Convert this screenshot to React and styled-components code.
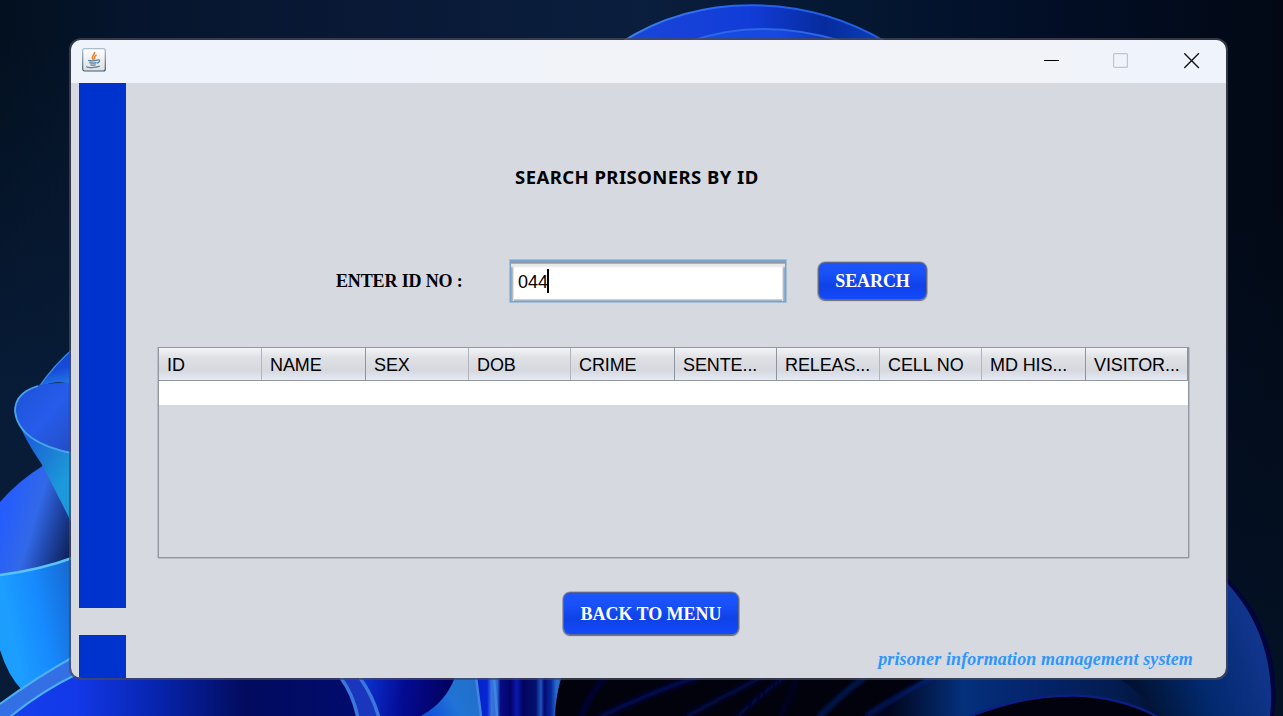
import React from "react";
import styled, { createGlobalStyle } from "styled-components";

const GlobalStyle = createGlobalStyle`
  * { box-sizing: border-box; }
  body { margin: 0; overflow: hidden; background: #04122a; }
`;

const Desktop = styled.main`
  position: relative;
  width: 1283px;
  height: 716px;
  overflow: hidden;
  padding: 38px 55px 36px 69px;
`;

const WallpaperArt = styled.svg`
  position: absolute;
  inset: 0;
  width: 1283px;
  height: 716px;
`;

const Window = styled.section`
  position: relative;
  width: 1159px;
  height: 642px;
  border: 2px solid rgba(72, 74, 86, 0.72);
  border-radius: 12px;
  overflow: hidden;
  display: flex;
  flex-direction: column;
  background: #d6d9e0;
  background-clip: padding-box;
`;

const TitleBar = styled.header`
  flex: 0 0 43px;
  display: flex;
  align-items: center;
  justify-content: space-between;
  padding: 0 26px 4px 11px;
  background: linear-gradient(90deg, #eff3fc 0%, #f0f3fb 30%, #f2f3f8 55%, #f2f3f8 82%, #eff3fc 94%);
`;

const Controls = styled.div`
  display: grid;
  grid-template-columns: 69px 71px 16px;
  padding-top: 3px;
`;

const Body = styled.div`
  flex: 1;
  display: flex;
  padding-left: 8px;
`;

const Rail = styled.aside`
  width: 47px;
  display: grid;
  grid-template-rows: 525px 43px;
  row-gap: 27px;
`;

const RailBlock = styled.div`
  background: #0033cd;
`;

const Content = styled.div`
  flex: 1;
  display: flex;
  flex-direction: column;
  padding: 80px 34px 0 32px;
`;

const Heading = styled.h1`
  margin: 0 0 0 357px;
  height: 28px;
  font: 700 18.5px/28px "Noto Sans", sans-serif;
  letter-spacing: 0.44px;
  color: #000;
  white-space: nowrap;
`;

const SearchForm = styled.div`
  display: flex;
  align-items: center;
  margin-top: 68px;
  padding-left: 178px;
  height: 44px;
`;

const Label = styled.label`
  width: 173px;
  font: 700 18px/22px "Liberation Serif", serif;
  letter-spacing: -0.14px;
  color: #000;
  white-space: nowrap;
`;

const Field = styled.div`
  width: 278px;
  height: 44px;
  display: flex;
  align-items: center;
  padding: 2px 0 0 8px;
  border: 1px solid #a3bfda;
  background: #fff;
  box-shadow: inset 0 0 0 1px #76a3cf, inset 0 2px 0 #76a3cf, inset 0 3px 0 #8e9aa6,
    inset 0 4px 0 #b0b0b2, inset 0 7px 2px #e8e8e8, inset 2px 0 0 #8caac8, inset 3px 0 0 #b4bac2,
    inset 4px 0 0 #e4e4e4, inset -2px 0 0 #8caac8, inset -3px 0 0 #b4bac2, inset -4px 0 0 #e4e4e4,
    inset 0 -2px 0 #a4b4c4, inset 0 -3px 0 #cdcfd2;
  font: 400 18px/24px "Liberation Sans", sans-serif;
  color: #000;
`;

const Caret = styled.span`
  width: 2px;
  height: 24px;
  margin: -2px 0 0 -1px;
  background: #000;
`;

const Button = styled.button`
  width: ${(p) => p.$width}px;
  height: ${(p) => p.$height}px;
  padding: 0;
  border: 1px solid #5b678c;
  border-radius: 7px;
  background: linear-gradient(#1d54fb 0%, #1850fa 30%, #0f42e7 62%, #134af9 100%);
  background-clip: border-box;
  box-shadow: 0 0 0 0.6px rgba(110, 112, 122, 0.75), 0 1px 1px rgba(90, 92, 104, 0.85);
  font: 700 18px/22px "Liberation Serif", serif;
  letter-spacing: ${(p) => p.$tracking}px;
  color: #fff;
  white-space: nowrap;
`;

const SearchButton = styled(Button)`
  margin: 0 0 0 31px;
`;

const BackButton = styled(Button)`
  margin: 34px 0 0 405px;
`;

const Table = styled.div`
  width: 1031px;
  height: 211px;
  margin-top: 44px;
  border: 1px solid #9297a1;
  box-shadow: -1px 0 0 #b9bdc6, 1px 0 0 #b9bdc6, 0 1px 0 #b9bdc6;
`;

const HeaderRow = styled.div`
  display: grid;
  grid-template-columns: 103px 104px 103px 102px 104px 102px 103px 102px 104px 102px;
  height: 33px;
  border-bottom: 1px solid #9297a1;
  background: linear-gradient(#f3f4f7 0%, #dfe1e5 30%, #d5d8de 70%, #e6eaf3 100%);
`;

const HeaderCell = styled.div`
  padding: 6px 0 0 8px;
  border-right: ${(p) => (p.$strong ? "1px solid #8f939b" : "1px solid #b2b5bb")};
  font: 400 18px/23px "Liberation Sans", sans-serif;
  letter-spacing: -0.1px;
  color: #000;
  white-space: nowrap;
`;

const EmptyRow = styled.div`
  height: 24px;
  background: #fff;
`;

const Footer = styled.footer`
  margin-top: 13px;
  align-self: flex-end;
  font: italic 700 18px/22px "Liberation Serif", serif;
  letter-spacing: 0.14px;
  margin-right: -1px;
  color: #3096f8;
  white-space: nowrap;
`;

const columns = ["ID", "NAME", "SEX", "DOB", "CRIME", "SENTE...", "RELEAS...", "CELL NO", "MD HIS...", "VISITOR..."];
const strongDividers = [1, 4, 5, 8, 9];

function Gradient({ id, from, to, stops }) {
  return (
    <linearGradient id={id} gradientUnits="userSpaceOnUse" x1={from[0]} y1={from[1]} x2={to[0]} y2={to[1]}>
      {stops.map(([offset, color]) => (
        <stop key={offset} offset={offset} stopColor={color} />
      ))}
    </linearGradient>
  );
}

function Wallpaper() {
  return (
    <WallpaperArt viewBox="0 0 1283 716" aria-hidden="true">
      <defs>
        <Gradient id="sky" from={[0, 0]} to={[1283, 0]} stops={[[0, "#03101f"], [0.1, "#06152d"], [0.28, "#091936"], [0.5, "#0a1e3d"], [0.65, "#051833"], [0.82, "#020e26"], [1, "#020915"]]} />
        <linearGradient id="glow" x2="0" y2="1">
          <stop stopColor="#081c38" stopOpacity="0" />
          <stop offset="0.8" stopColor="#081c38" />
        </linearGradient>
        <linearGradient id="rightGlow" x2="0" y2="1">
          <stop stopColor="#041226" stopOpacity="0" />
          <stop offset="1" stopColor="#041226" />
        </linearGradient>
        <Gradient id="bloom" from={[650, 30]} to={[870, 30]} stops={[[0, "#1944d8"], [0.45, "#123cd8"], [0.8, "#062b9d"], [1, "#0b3ab5"]]} />
        <Gradient id="bloomInner" from={[690, 30]} to={[840, 40]} stops={[[0, "#164be6"], [0.6, "#1748df"], [1, "#0a32b4"]]} />
        <Gradient id="rim" from={[620, 40]} to={[880, 40]} stops={[[0, "#3d83e8"], [0.5, "#2660f4"], [1, "#225fdb"]]} />
        <Gradient id="peak" from={[50, 350]} to={[60, 390]} stops={[[0, "#1642d1"], [0.5, "#174bd9"], [1, "#2686e6"]]} />
        <Gradient id="cup" from={[15, 390]} to={[72, 440]} stops={[[0, "#1d52d9"], [0.55, "#265cea"], [1, "#244fcb"]]} />
        <Gradient id="cone" from={[35, 430]} to={[78, 455]} stops={[[0, "#1c62df"], [0.5, "#1b7ed4"], [1, "#1c98db"]]} />
        <Gradient id="fold" from={[0, 515]} to={[82, 540]} stops={[[0, "#245cff"], [0.4, "#3269e8"], [0.7, "#1b3d96"], [1, "#09163f"]]} />
        <Gradient id="bowl" from={[5, 600]} to={[75, 585]} stops={[[0, "#1c9eff"], [0.45, "#168aff"], [1, "#1768cf"]]} />
        <Gradient id="low" from={[0, 690]} to={[350, 690]} stops={[[0, "#1740ed"], [0.22, "#1238e8"], [0.45, "#0724ad"], [0.7, "#020b5e"], [1, "#010b6c"]]} />
        <Gradient id="lowRight" from={[365, 690]} to={[450, 700]} stops={[[0, "#0a2fce"], [0.45, "#040b93"], [1, "#02015d"]]} />
        <Gradient id="stem" from={[430, 716]} to={[478, 690]} stops={[[0, "#1153db"], [0.5, "#2074d6"], [1, "#226fc9"]]} />
        <Gradient id="ribbons" from={[477, 700]} to={[561, 700]} stops={[[0, "#0625c8"], [0.12, "#0725d4"], [0.17, "#3974d9"], [0.24, "#2f6bd6"], [0.28, "#060c86"], [0.4, "#03036a"], [0.47, "#0a18b0"], [0.55, "#03045e"], [0.7, "#04106f"], [0.76, "#2255bd"], [0.8, "#030a72"], [0.88, "#08289c"], [0.95, "#2872d2"], [1, "#1c58b5"]]} />
        <Gradient id="rightPetal" from={[1120, 716]} to={[1270, 660]} stops={[[0, "#010b26"], [0.2, "#011538"], [0.55, "#02296e"], [0.85, "#0d3183"], [1, "#12368f"]]} />
        <linearGradient id="rightLow" gradientUnits="userSpaceOnUse" x1="890" y1="0" x2="1180" y2="0">
          <stop stopColor="#01061e" />
          <stop offset="0.25" stopColor="#04307c" />
          <stop offset="0.5" stopColor="#04246b" />
          <stop offset="0.78" stopColor="#031c50" />
          <stop offset="1" stopColor="#010b26" />
        </linearGradient>
        <filter id="soft"><feGaussianBlur stdDeviation="2" /></filter>
      </defs>

      <rect width="1283" height="716" fill="url(#sky)" />
      <rect y="40" width="120" height="450" fill="url(#glow)" />
      <rect y="489" width="120" height="227" fill="#081c38" />
      <rect x="1180" y="200" width="103" height="516" fill="url(#rightGlow)" />

      <path d="M622 42C700-8 805-6 886 42Z" fill="url(#bloom)" />
      <path d="M622 42C700-8 805-6 886 42" fill="none" stroke="url(#rim)" strokeWidth="2" />
      <path d="M688 42Q760 16 845 42Z" fill="url(#bloomInner)" />
      <path d="M688 42Q760 16 845 42" fill="none" stroke="#2e66e3" strokeWidth="2" />

      <path d="M75 347Q54 365 39 387Q59 378 75 386Z" fill="url(#peak)" />
      <path d="M75 347Q54 365 39 387" fill="none" stroke="#3587dd" strokeWidth="1.5" />
      <path d="M44 465Q18 481 0 502V577Q40 571 75 557V500Z" fill="url(#fold)" />
      <path d="M15 412Q21 434 41 463Q58 495 74 528V445Q37 453 15 412Z" fill="url(#cone)" />
      <path d="M75 383Q15 380 15 409Q15 440 75 453Z" fill="url(#cup)" />
      <path d="M38 386Q15 393 15 411Q18 443 75 454" fill="none" stroke="#4aa5e8" strokeWidth="1.8" />
      <path d="M0 575Q40 570 75 557V658L22 690Q8 676 0 650Z" fill="url(#bowl)" />
      <path d="M0 575Q40 570 75 557" fill="none" stroke="#59c4f6" strokeWidth="2.5" />

      <path d="M0 716V704Q40 678 75 656L350 670L390 716Z" fill="url(#low)" />
      <path d="M0 704Q37 677 73 657L77 673Q42 691 11 716H0Z" fill="#3470e5" />
      <path d="M0 704Q37 677 75 656M11 716Q42 691 77 674" fill="none" stroke="#4bb1ee" strokeWidth="2" />
      <path d="M358 676H470V716H378Z" fill="url(#lowRight)" />
      <path d="M340 678Q352 694 357 718L378 718Q371 696 358 678Z" fill="#1a36bd" />
      <path d="M341 678Q353 694 358 718M360 678Q373 696 379 718" fill="none" stroke="#3c78db" strokeWidth="3.5" />
      <path d="M455 677H477L482 716H421Q446 702 455 677Z" fill="url(#stem)" />
      <path d="M476 677H562Q556 694 555 716H481Z" fill="url(#ribbons)" />
      <path d="M476 677L481 716M494 677L497 716" fill="none" stroke="#3d86e1" strokeWidth="2.5" />
      <path d="M562 676H1200V716H555Q556 694 562 676Z" fill="#01020c" />
      <g fill="none" stroke="#02074a" strokeWidth="4" filter="url(#soft)">
        <path d="M606 676Q588 696 581 718" />
        <path d="M700 676Q648 693 598 718" stroke="#030a66" />
        <path d="M764 676Q724 696 684 718" stroke="#030a52" />
        <path d="M786 676Q762 693 736 718" />
        <path d="M798 676Q790 696 780 718" strokeWidth="2" />
        <path d="M866 676Q838 697 818 718" stroke="#062470" />
      </g>
      <path d="M930 676H1205V716H872Q894 698 930 676Z" fill="url(#rightLow)" />
      <path d="M938 674Q906 690 866 716" fill="none" stroke="#0a2390" strokeWidth="3" filter="url(#soft)" />
      <path d="M1225 576C1262 610 1281 660 1274 716H1200V670Z" fill="#02043c" />
      <path d="M1220 576C1256 610 1276 660 1270 716H1160Q1140 692 1116 676H1220Z" fill="url(#rightPetal)" />
      <path d="M966 718Q1020 695 1075 696Q1122 697 1160 718Z" fill="#01020e" />
      <path d="M966 718Q1020 695 1075 695.5Q1122 697 1160 718" fill="none" stroke="#0b1f83" strokeWidth="2.5" />
    </WallpaperArt>
  );
}

function JavaIcon() {
  return (
    <svg width="24" height="24" viewBox="0 0 24 24" aria-label="Java">
      <defs>
        <linearGradient id="iconPaper" x2="0" y2="1">
          <stop stopColor="#fff" />
          <stop offset="1" stopColor="#dfdfdf" />
        </linearGradient>
        <linearGradient id="iconEdge" x2="0" y2="1">
          <stop stopColor="#a8bdcd" />
          <stop offset="1" stopColor="#3f5a72" />
        </linearGradient>
      </defs>
      <rect x=".7" y=".7" width="22.6" height="22.3" rx="2" fill="url(#iconPaper)" stroke="url(#iconEdge)" strokeWidth="1.2" />
      <path d="M12.5 4C13.6 7 8.2 7.4 11.2 11.8M14.6 7C11.5 8.2 12.8 9.2 12.4 11.3" fill="none" stroke="#ed812e" strokeWidth="1.5" />
      <path d="M6.2 12.3Q10 13.3 15.3 12.2M7.3 14.7Q11 15.7 14.5 14.7M8.3 16.8Q11 17.6 13.7 16.8M15.4 12.2Q18.2 11.3 17.3 13.5Q16.8 14.7 14.8 15.2M5.2 18.3Q4 19.1 6.5 19.4Q12.8 20.1 17.8 18.2" fill="none" stroke="#5482a2" strokeWidth="1.3" />
    </svg>
  );
}

function MinimizeIcon() {
  return (
    <svg width="16" height="16" viewBox="0 0 16 16">
      <path d="M0 7.5H15" stroke="#000" />
    </svg>
  );
}

function MaximizeIcon() {
  return (
    <svg width="16" height="16" viewBox="0 0 16 16">
      <rect x=".6" y=".6" width="13.8" height="13.8" rx="1" fill="none" stroke="#c2c4c9" strokeWidth="1.2" />
    </svg>
  );
}

function CloseIcon() {
  return (
    <svg width="16" height="16" viewBox="0 0 16 16">
      <path d="M.3 .3L14.9 14.9M14.9 .3L.3 14.9" stroke="#15161a" strokeWidth="1.4" />
    </svg>
  );
}

export default function App() {
  return (
    <>
      <GlobalStyle />
      <Desktop>
        <Wallpaper />
        <Window>
          <TitleBar>
            <JavaIcon />
            <Controls>
              <MinimizeIcon />
              <MaximizeIcon />
              <CloseIcon />
            </Controls>
          </TitleBar>
          <Body>
            <Rail>
              <RailBlock />
              <RailBlock />
            </Rail>
            <Content>
              <Heading>SEARCH PRISONERS BY ID</Heading>
              <SearchForm>
                <Label>ENTER ID NO :</Label>
                <Field>
                  044
                  <Caret />
                </Field>
                <SearchButton $width={109} $height={38} $tracking={-0.1}>SEARCH</SearchButton>
              </SearchForm>
              <Table>
                <HeaderRow>
                  {columns.map((name, i) => (
                    <HeaderCell key={name} $strong={strongDividers.includes(i)}>{name}</HeaderCell>
                  ))}
                </HeaderRow>
                <EmptyRow />
              </Table>
              <BackButton $width={176} $height={43} $tracking={-0.04}>BACK TO MENU</BackButton>
              <Footer>prisoner information management system</Footer>
            </Content>
          </Body>
        </Window>
      </Desktop>
    </>
  );
}
